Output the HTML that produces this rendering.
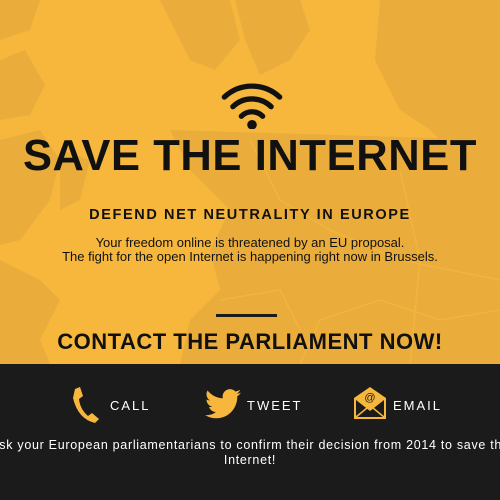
<!DOCTYPE html>
<html><head><style>
body{margin:0;width:500px;height:500px;overflow:hidden;font-family:"Liberation Sans",sans-serif;background:#1c1b1b;}
.top{position:absolute;left:0;top:0;width:500px;height:364px;background:#f6b73c;overflow:hidden}
.abs{position:absolute;left:0;width:500px;text-align:center;white-space:nowrap}
.bot{position:absolute;left:0;top:364px;width:500px;height:136px;background:#1c1b1b}
</style></head><body>
<div class="top">
<svg width="500" height="364" style="position:absolute;left:0;top:0">
<g fill="#eaad3c">
<path d="M160 0 L230 0 L240 40 L215 70 L190 60 L175 30 Z"/>
<path d="M235 0 L300 0 L310 30 L290 60 L260 75 L245 40 Z"/>
<path d="M380 0 L500 0 L500 150 L470 170 L430 130 L400 110 L375 60 Z"/>
<path d="M0 0 L40 0 L30 30 L0 40 Z"/>
<path d="M0 60 L25 50 L45 85 L30 115 L0 120 Z"/>
<path d="M0 140 L40 130 L60 160 L50 200 L20 240 L0 245 Z"/>
<path d="M60 150 L90 160 L80 200 L60 210 Z"/>
<path d="M170 130 L500 140 L500 364 L180 364 L190 320 L220 290 L210 250 L230 210 L190 170 Z"/>
<path d="M0 260 L40 280 L60 300 L40 340 L50 364 L0 364 Z"/>
</g>
<g fill="none" stroke="#f6b73c" stroke-width="1.5" opacity=".7">
<path d="M250 140 L280 200 L330 230 L400 260 L500 280"/>
<path d="M300 364 L320 320 L380 300 L440 320 L500 310"/>
<path d="M400 170 L420 260 L410 364"/>
<path d="M220 300 L280 290 L300 330"/>
</g>
</svg>
<svg width="64" height="50" style="position:absolute;left:220px;top:79px" viewBox="0 0 60 47">
<g fill="none" stroke="#111" stroke-width="5" stroke-linecap="round">
<path d="M4 17 A38 38 0 0 1 56 17"/>
<path d="M12 26 A26 26 0 0 1 48 26"/>
<path d="M20 35 A14 14 0 0 1 40 35"/>
</g>
<circle cx="30" cy="43" r="4.5" fill="#111"/>
</svg>
<div class="abs" style="top:132px;font-size:43.5px;font-weight:bold;color:#111;letter-spacing:0.6px">SAVE THE INTERNET</div>
<div class="abs" style="top:207px;font-size:14.5px;font-weight:bold;color:#111;letter-spacing:1.6px">DEFEND NET NEUTRALITY IN EUROPE</div>
<div class="abs" style="top:236px;font-size:13px;color:#111;line-height:14px">Your freedom online is threatened by an EU proposal.<br>The fight for the open Internet is happening right now in Brussels.</div>
<div style="position:absolute;left:216px;top:314px;width:61px;height:3px;background:#1c1b1b"></div>
<div class="abs" style="top:329px;font-size:22px;font-weight:bold;color:#111;letter-spacing:0.5px">CONTACT THE PARLIAMENT NOW!</div>
</div>
<div class="bot">
<svg width="30" height="38" viewBox="0 0 30 38" style="position:absolute;left:70px;top:22px">
<path d="M5 3 L10 1 L13 10 L9 13 Q10 23 18 30 L22 27 L29 33 L25 37 Q8 33 3 12 Z" fill="#f6b73c"/>
</svg>
<div style="position:absolute;left:110px;top:34px;color:#fff;font-size:13px;letter-spacing:2px">CALL</div>
<svg width="36" height="32" viewBox="0 0 24 20" style="position:absolute;left:205px;top:24px">
<path d="M24 2.4c-.9.4-1.8.6-2.8.8 1-.6 1.800-1.600 2.200-2.700-1 .6-2 1-3.100 1.200A4.900 4.900 0 0 0 11.900 6.200 14 14 0 0 1 1.700 1 4.900 4.900 0 0 0 3.200 7.600c-.8 0-1.600-.3-2.200-.6 0 2.400 1.700 4.400 3.900 4.800-.7.2-1.500.2-2.200.1.6 2 2.400 3.400 4.600 3.400A9.900 9.900 0 0 1 0 17.300 14 14 0 0 0 7.500 19.500c9 0 14-7.500 14-14v-.6c1-.7 1.800-1.600 2.500-2.500z" fill="#f6b73c"/>
</svg>
<div style="position:absolute;left:247px;top:34px;color:#fff;font-size:13px;letter-spacing:2px">TWEET</div>
<svg width="36" height="34" viewBox="0 0 36 34" style="position:absolute;left:352px;top:22px">
<path d="M2 12 L18 1 L34 12 L34 33 L2 33 Z" fill="#f6b73c"/>
<path d="M4 14 L18 25 L32 14 L32 31 L4 31 Z" fill="#1c1b1b"/>
<path d="M4 31 L15 22 M32 31 L21 22" stroke="#f6b73c" stroke-width="1.5"/>
<text x="18" y="15" font-size="11" text-anchor="middle" fill="#1c1b1b" font-family="Liberation Sans">@</text>
</svg>
<div style="position:absolute;left:393px;top:34px;color:#fff;font-size:13px;letter-spacing:2px">EMAIL</div>
<div class="abs" style="top:74px;left:-100px;width:700px;color:#fff;font-size:12.5px;letter-spacing:0.7px;line-height:15px">Ask your European parliamentarians to confirm their decision from 2014 to save the<br>Internet!</div>
</div>
</body></html>
